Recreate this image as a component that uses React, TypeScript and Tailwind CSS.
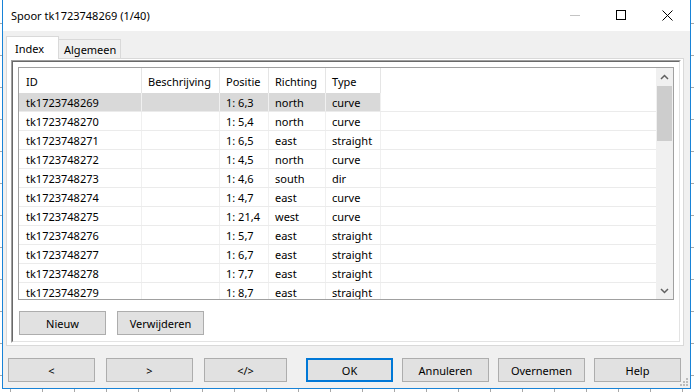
import React from "react";

const rows: string[][] = [
  ["tk1723748269", "", "1: 6,3", "north", "curve"],
  ["tk1723748270", "", "1: 5,4", "north", "curve"],
  ["tk1723748271", "", "1: 6,5", "east", "straight"],
  ["tk1723748272", "", "1: 4,5", "north", "curve"],
  ["tk1723748273", "", "1: 4,6", "south", "dir"],
  ["tk1723748274", "", "1: 4,7", "east", "curve"],
  ["tk1723748275", "", "1: 21,4", "west", "curve"],
  ["tk1723748276", "", "1: 5,7", "east", "straight"],
  ["tk1723748277", "", "1: 6,7", "east", "straight"],
  ["tk1723748278", "", "1: 7,7", "east", "straight"],
  ["tk1723748279", "", "1: 8,7", "east", "straight"],
];

const headers = ["ID", "Beschrijving", "Positie", "Richting", "Type"];
const colCls = [
  "w-[123px] pl-[7px]",
  "w-[78px] pl-[6px]",
  "w-[49px] pl-[6px]",
  "w-[57px] pl-[6px]",
  "w-[55px] pl-[6px]",
];

function Btn({ label, cls }: { label: string; cls: string }) {
  return (
    <div
      className={`h-[24px] bg-[#e1e1e1] border border-[#adadad] flex items-center justify-center shrink-0 ${cls}`}
    >
      {label}
    </div>
  );
}

export default function App() {
  return (
    <div className="relative w-[694px] h-[392px] overflow-hidden bg-white bg-[linear-gradient(to_right,#a8a8a8_1px,transparent_1px),linear-gradient(to_bottom,#a8a8a8_1px,transparent_1px)] [background-size:32px_32px] [background-position:10px_23px] font-['Noto_Sans',sans-serif] text-[11px] leading-none text-black">
      <div className="relative ml-[2px] w-[689px] h-[389px] border-x border-b border-[#1883d7] flex flex-col">
        {/* Title bar */}
        <div className="h-[31px] bg-white flex shrink-0">
          <div className="flex-1 pl-[8px] flex items-center text-[11px]">
            Spoor tk1723748269 (1/40)
          </div>
          <div className="w-[46px] h-[30px] flex items-center justify-center">
            <svg width="10" height="10" viewBox="0 0 10 10">
              <line x1="0" y1="5.5" x2="10" y2="5.5" stroke="#c4c4c4" strokeWidth="1" />
            </svg>
          </div>
          <div className="w-[46px] h-[30px] flex items-center justify-center">
            <svg width="10" height="10" viewBox="0 0 10 10">
              <rect x="0.5" y="0.5" width="9" height="9" fill="none" stroke="#000" strokeWidth="1" />
            </svg>
          </div>
          <div className="w-[46px] h-[30px] flex items-center justify-center">
            <svg width="11" height="11" viewBox="0 0 11 11">
              <path d="M0.5 0.5 L10.5 10.5 M10.5 0.5 L0.5 10.5" stroke="#000" strokeWidth="1" />
            </svg>
          </div>
        </div>

        {/* Content */}
        <div className="flex-1 bg-[#f0f0f0] flex flex-col">
          {/* Tabs */}
          <div className="mt-[5px] ml-[3px] h-[22px] flex items-end">
            <div className="relative z-10 -mb-px h-[23px] w-[53px] bg-white border-t border-x border-[#d9d9d9] pl-[8px] flex items-center">
              Index
            </div>
            <div className="h-[19px] w-[62px] bg-[#f0f0f0] border-t border-r border-[#d9d9d9] pl-[5px] flex items-center">
              Algemeen
            </div>
          </div>

          {/* Tab panel */}
          <div className="ml-[3px] w-[678px] h-[288px] border border-[#d9d9d9] bg-white">
            <div className="mt-px ml-[4px] w-[670px] h-[283px] border border-t-[#a0a0a0] border-l-[#a0a0a0] border-r-white border-b-white">
              <div className="h-full border border-t-[#696969] border-l-[#696969] border-r-[#e3e3e3] border-b-[#e3e3e3] flex flex-col">
                {/* List view */}
                <div className="ml-[5px] mt-[5px] w-[656px] h-[233px] border border-[#a0a0a0] flex">
                  <div className="flex-1 flex flex-col overflow-hidden">
                    <div className="h-[25px] flex shrink-0">
                      {headers.map((h, i) => (
                        <div
                          key={h}
                          className={`h-full border-r border-[#e5e5e5] flex items-center pt-[1px] whitespace-nowrap ${colCls[i]}`}
                        >
                          {h}
                        </div>
                      ))}
                    </div>
                    {rows.map((r, ri) => (
                      <div key={ri} className="h-[19px] shrink-0 border-b border-[#ebebeb] flex">
                        <div className={`flex ${ri === 0 ? "bg-[#d9d9d9]" : ""}`}>
                          {r.map((c, ci) => (
                            <div
                              key={ci}
                              className={`h-full border-r border-[#f0f0f0] flex items-center whitespace-nowrap overflow-hidden ${colCls[ci]}`}
                            >
                              {c}
                            </div>
                          ))}
                        </div>
                      </div>
                    ))}
                  </div>
                  {/* Scrollbar */}
                  <div className="w-[17px] bg-[#f0f0f0] flex flex-col shrink-0">
                    <div className="h-[17px] flex items-center justify-center shrink-0">
                      <svg width="9" height="6" viewBox="0 0 9 6">
                        <path d="M1 5 L4.5 1.5 L8 5" fill="none" stroke="#606060" strokeWidth="1.5" />
                      </svg>
                    </div>
                    <div className="mt-px mx-px h-[55px] bg-[#cdcdcd] shrink-0" />
                    <div className="flex-1" />
                    <div className="h-[17px] flex items-center justify-center shrink-0">
                      <svg width="9" height="6" viewBox="0 0 9 6">
                        <path d="M1 1 L4.5 4.5 L8 1" fill="none" stroke="#606060" strokeWidth="1.5" />
                      </svg>
                    </div>
                  </div>
                </div>

                {/* Panel buttons */}
                <div className="mt-[11px] ml-[6px] flex gap-[11px]">
                  <Btn label="Nieuw" cls="w-[87px]" />
                  <Btn label="Verwijderen" cls="w-[87px]" />
                </div>
              </div>
            </div>
          </div>

          {/* Bottom buttons */}
          <div className="mt-[12px] ml-[5px] flex">
            <Btn label="<" cls="w-[87px]" />
            <Btn label=">" cls="w-[87px] ml-[11px]" />
            <Btn label="</>" cls="w-[83px] ml-[11px]" />
            <div className="ml-[19px] w-[87px] h-[24px] bg-[#e1e1e1] border-2 border-[#0078d7] flex items-center justify-center shrink-0">
              OK
            </div>
            <Btn label="Annuleren" cls="w-[87px] ml-[9px]" />
            <Btn label="Overnemen" cls="w-[87px] ml-[9px]" />
            <Btn label="Help" cls="w-[87px] ml-[9px]" />
          </div>
        </div>

        {/* Resize grip */}
        <svg className="absolute right-[1px] bottom-[1px]" width="9" height="9" viewBox="0 0 9 9">
          <rect x="6" y="0" width="2" height="2" fill="#bcbcbc" />
          <rect x="3" y="3" width="2" height="2" fill="#bcbcbc" />
          <rect x="6" y="3" width="2" height="2" fill="#bcbcbc" />
          <rect x="0" y="6" width="2" height="2" fill="#bcbcbc" />
          <rect x="3" y="6" width="2" height="2" fill="#bcbcbc" />
          <rect x="6" y="6" width="2" height="2" fill="#bcbcbc" />
        </svg>
      </div>
    </div>
  );
}
